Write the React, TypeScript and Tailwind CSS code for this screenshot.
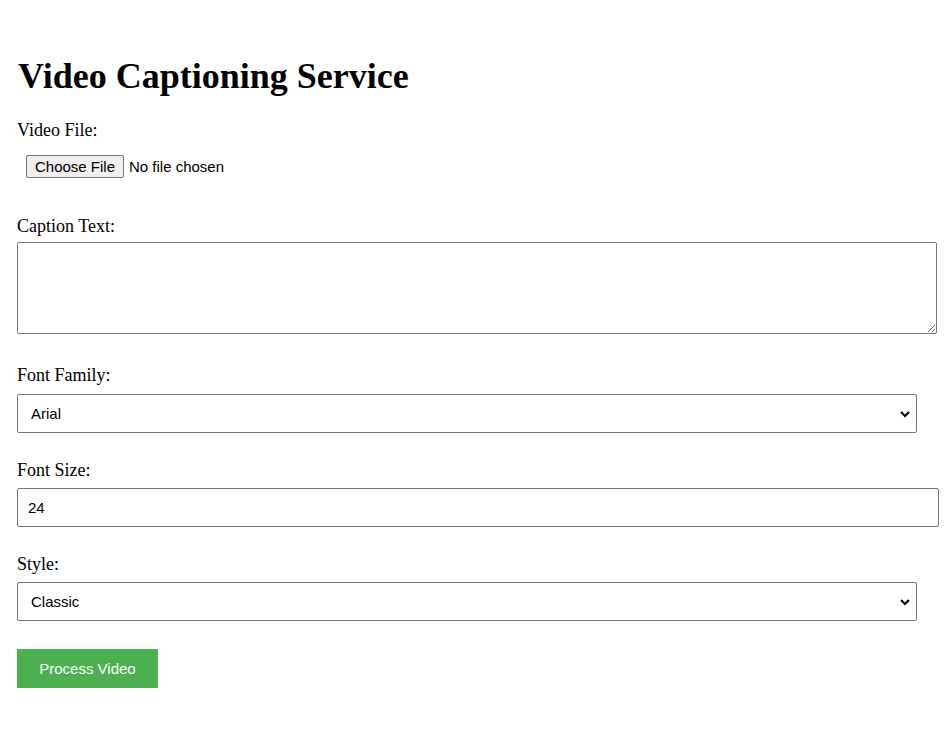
import React, { useState } from 'react';

const serif = { fontFamily: '"Liberation Serif", "Times New Roman", serif' };

function Label({ children, className }: { children: React.ReactNode; className: string }) {
  return (
    <label className={`block text-[18px] leading-[21px] text-black ${className}`}>{children}</label>
  );
}

function Chevron() {
  return (
    <svg
      className="pointer-events-none absolute right-[6px] top-1/2 -translate-y-1/2"
      width="12"
      height="8"
      viewBox="0 0 12 8"
    >
      <path d="M2 2l4 4 4-4" fill="none" stroke="#000" strokeWidth="2" />
    </svg>
  );
}

export default function App() {
  const [caption, setCaption] = useState('');
  const [family, setFamily] = useState('Arial');
  const [size, setSize] = useState('24');
  const [style, setStyle] = useState('Classic');

  return (
    <div className="min-h-screen bg-white pl-[17px] pt-[56px] text-black" style={serif}>
      <h1 className="ml-[1px] text-[36px] font-bold leading-[41px]">Video Captioning Service</h1>

      {/* Video file */}
      <Label className="mt-[23px]">Video File:</Label>
      <div className="mt-[14px] flex items-center font-['Liberation_Sans',Arial,sans-serif] text-[15px] leading-[17px]">
        <button className="ml-[9px] h-[23px] w-[98px] rounded-[2px] border border-[#767676] bg-[#efefef] text-black">
          Choose File
        </button>
        <span className="ml-[5px]">No file chosen</span>
      </div>

      {/* Caption */}
      <Label className="mt-[38px]">Caption Text:</Label>
      <textarea
        value={caption}
        onChange={(e) => setCaption(e.target.value)}
        className="mt-[5px] block h-[92px] w-[920px] resize rounded-[2px] border border-[#767676] bg-white p-[10px] font-['Liberation_Sans',Arial,sans-serif] text-[15px] outline-none"
      />

      {/* Font family */}
      <Label className="mt-[31px]">Font Family:</Label>
      <div className="relative mt-[8px] w-[900px]">
        <select
          value={family}
          onChange={(e) => setFamily(e.target.value)}
          className="block h-[39px] w-full appearance-none rounded-[2px] border border-[#767676] bg-white pl-[13px] font-['Liberation_Sans',Arial,sans-serif] text-[15px] leading-[17px] outline-none"
        >
          <option>Arial</option>
          <option>Helvetica</option>
          <option>Times New Roman</option>
          <option>Courier New</option>
        </select>
        <Chevron />
      </div>

      {/* Font size */}
      <Label className="mt-[27px]">Font Size:</Label>
      <input
        type="number"
        value={size}
        onChange={(e) => setSize(e.target.value)}
        className="mt-[7px] block h-[39px] w-[922px] rounded-[2px] border border-[#767676] bg-white px-[10px] font-['Liberation_Sans',Arial,sans-serif] text-[15px] leading-[17px] outline-none [appearance:textfield]"
      />

      {/* Style */}
      <Label className="mt-[27px]">Style:</Label>
      <div className="relative mt-[7px] w-[900px]">
        <select
          value={style}
          onChange={(e) => setStyle(e.target.value)}
          className="block h-[39px] w-full appearance-none rounded-[2px] border border-[#767676] bg-white pl-[13px] font-['Liberation_Sans',Arial,sans-serif] text-[15px] leading-[17px] outline-none"
        >
          <option>Classic</option>
          <option>Modern</option>
          <option>Bold</option>
          <option>Outline</option>
        </select>
        <Chevron />
      </div>

      <button className="mt-[28px] block h-[39px] w-[141px] bg-[#4caf50] font-['Liberation_Sans',Arial,sans-serif] text-[15px] leading-[17px] text-white">
        Process Video
      </button>
    </div>
  );
}
